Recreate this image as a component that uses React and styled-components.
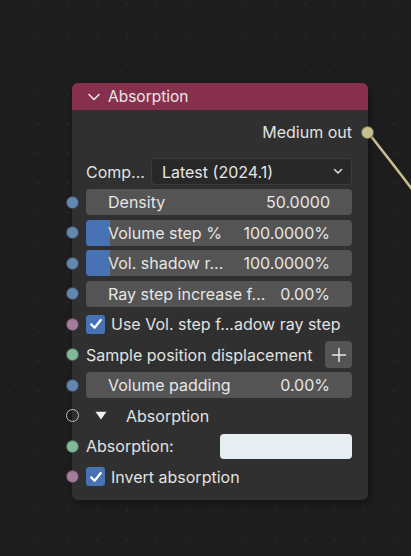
import React from 'react'
import styled, { createGlobalStyle } from 'styled-components'

const GlobalStyle = createGlobalStyle`
  html, body {
    margin: 0;
    padding: 0;
    background: #1d1d1d;
  }
  body {
    font-family: Inter, "Noto Sans", sans-serif;
    overflow: hidden;
  }
`

const Canvas = styled.div`
  position: relative;
  width: 411px;
  height: 556px;
  overflow: hidden;
  background-color: #1d1d1d;
  background-image: radial-gradient(circle, #282828 0.9px, transparent 1.3px);
  background-size: 29.7px 29.7px;
  background-position: -6.6px -9.8px;
`

const Wire = styled.svg`
  position: absolute;
  left: 0;
  top: 0;
  pointer-events: none;
`

const Node = styled.div`
  position: absolute;
  left: 72px;
  top: 83px;
  width: 296px;
  background: #303030;
  border-radius: 6px;
  box-shadow: 2px 3px 6px rgba(0, 0, 0, 0.35);
  color: #e4e4e4;
  font-size: 16px;
`

const Header = styled.div`
  height: 27px;
  background: #87304e;
  border-radius: 6px 6px 0 0;
  display: flex;
  align-items: center;
  gap: 8px;
  padding-left: 16px;
  font-size: 15.5px;
  color: #e8e8e8;
`

const Body = styled.div`
  display: flex;
  flex-direction: column;
  padding: 7px 16px 8px 14px;
`

const Row = styled.div`
  position: relative;
  height: 30.5px;
  display: flex;
  align-items: center;
  justify-content: ${p => (p.$end ? 'flex-end' : 'flex-start')};
  gap: ${p => p.$gap || 0}px;
  margin-bottom: ${p => p.$after || 0}px;
  white-space: nowrap;
`

const Socket = styled.span`
  position: absolute;
  top: 50%;
  width: 13px;
  height: 13px;
  margin-top: -6.5px;
  border-radius: 50%;
  box-sizing: border-box;
  background: ${p => p.$color || 'transparent'};
  border: 1px solid ${p => (p.$hollow ? '#bdbdbd' : 'rgba(0,0,0,0.45)')};
  ${p => (p.$out ? 'right: -21.5px;' : 'left: -20.5px;')}
`

const Field = styled.div`
  position: relative;
  flex: 1;
  height: 26px;
  border-radius: 4px;
  background: #545454;
  overflow: hidden;
  display: flex;
  align-items: center;
  justify-content: space-between;
  padding: 0 22px;
`

const Fill = styled.span`
  position: absolute;
  left: 0;
  top: 0;
  bottom: 0;
  background: #4772b3;
`

const FieldText = styled.span`
  position: relative;
  color: #e6e6e6;
`

const Label = styled.span`
  color: #e2e2e2;
  flex: ${p => (p.$grow ? 1 : 'none')};
`

const Select = styled.div`
  flex: 1;
  height: 27px;
  box-sizing: border-box;
  border: 1px solid #3c3c3c;
  background: #282828;
  border-radius: 4px;
  display: flex;
  align-items: center;
  justify-content: space-between;
  padding: 0 8px 0 10px;
  color: #e6e6e6;
`

const Check = styled.span`
  width: 19px;
  height: 19px;
  border-radius: 3px;
  background: #4772b3;
  display: flex;
  align-items: center;
  justify-content: center;
  flex: none;
`

const IconButton = styled.div`
  width: 27px;
  height: 27px;
  border-radius: 4px;
  background: #545454;
  display: flex;
  align-items: center;
  justify-content: center;
`

const PanelToggle = styled.span`
  display: flex;
  align-items: center;
  padding-left: 9px;
  width: 31px;
  flex: none;
`

const Swatch = styled.div`
  width: 132px;
  height: 25px;
  border-radius: 4px;
  background: #e7eef2;
`

const CheckMark = () => (
  <svg width="14" height="14" viewBox="0 0 14 14">
    <polyline points="2.2,7.4 5.6,10.8 11.8,3" fill="none" stroke="#fff" strokeWidth="2.2" strokeLinecap="round" strokeLinejoin="round" />
  </svg>
)

const sliders = [
  { label: 'Density', value: '50.0000', fill: 0 },
  { label: 'Volume step %', value: '100.0000%', fill: 24 },
  { label: 'Vol. shadow r...', value: '100.0000%', fill: 24 },
  { label: 'Ray step increase f...', value: '0.00%', fill: 0 },
]

const FLOAT = '#6388b0'
const BOOL = '#a57c9d'
const VECTOR = '#84b89b'

export default function App() {
  return (
    <>
      <GlobalStyle />
      <Canvas>
        <Wire width="411" height="556">
          <path d="M367 131 C 380 148, 398 170, 420 200" stroke="#c8bd8e" strokeWidth="2.6" fill="none" />
        </Wire>
        <Node>
          <Header>
            <svg width="12" height="8" viewBox="0 0 12 8">
              <polyline points="1,1.5 6,6.5 11,1.5" fill="none" stroke="#e8e8e8" strokeWidth="1.6" strokeLinecap="round" strokeLinejoin="round" />
            </svg>
            Absorption
          </Header>
          <Body>
            <Row $end $after={9}>
              <Label>Medium out</Label>
              <Socket $out $color="#c9c08f" />
            </Row>
            <Row $gap={6}>
              <Label>Comp...</Label>
              <Select>
                <span>Latest (2024.1)</span>
                <svg width="10" height="7" viewBox="0 0 10 7">
                  <polyline points="1.5,1.5 5,5 8.5,1.5" fill="none" stroke="#e0e0e0" strokeWidth="1.5" strokeLinecap="round" strokeLinejoin="round" />
                </svg>
              </Select>
            </Row>
            {sliders.map(s => (
              <Row key={s.label}>
                <Socket $color={FLOAT} />
                <Field>
                  {s.fill > 0 && <Fill style={{ width: s.fill }} />}
                  <FieldText>{s.label}</FieldText>
                  <FieldText>{s.value}</FieldText>
                </Field>
              </Row>
            ))}
            <Row $gap={6}>
              <Socket $color={BOOL} />
              <Check><CheckMark /></Check>
              <Label>Use Vol. step f...adow ray step</Label>
            </Row>
            <Row>
              <Socket $color={VECTOR} />
              <Label $grow>Sample position displacement</Label>
              <IconButton>
                <svg width="16" height="16" viewBox="0 0 16 16">
                  <path d="M8 1.5v13M1.5 8h13" stroke="#e8e8e8" strokeWidth="1.5" strokeLinecap="round" />
                </svg>
              </IconButton>
            </Row>
            <Row>
              <Socket $color={FLOAT} />
              <Field>
                <FieldText>Volume padding</FieldText>
                <FieldText>0.00%</FieldText>
              </Field>
            </Row>
            <Row>
              <Socket $hollow />
              <PanelToggle>
                <svg width="12" height="9" viewBox="0 0 12 9">
                  <polygon points="0.5,0.8 11.5,0.8 6,8.5" fill="#f0f0f0" />
                </svg>
              </PanelToggle>
              <Label>Absorption</Label>
            </Row>
            <Row>
              <Socket $color={VECTOR} />
              <Label $grow>Absorption:</Label>
              <Swatch />
            </Row>
            <Row $gap={6}>
              <Socket $color={BOOL} />
              <Check><CheckMark /></Check>
              <Label>Invert absorption</Label>
            </Row>
          </Body>
        </Node>
      </Canvas>
    </>
  )
}
